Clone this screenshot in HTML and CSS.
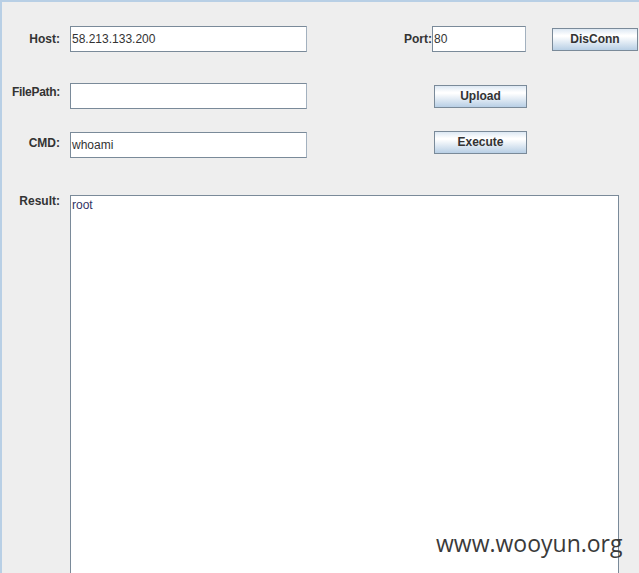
FILE: index.html
```html
<!DOCTYPE html>
<html>
<head>
<meta charset="utf-8">
<link rel="stylesheet" href="styles.css">
</head>
<body>
<div class="frame">
  <div class="row row-host">
    <label class="lbl lbl-host">Host:</label>
    <div class="field field-wide">58.213.133.200</div>
    <label class="lbl lbl-port">Port:</label>
    <div class="field field-port">80</div>
    <button class="btn btn-disconn">DisConn</button>
  </div>
  <div class="row row-path">
    <label class="lbl lbl-path">FilePath:</label>
    <div class="field field-wide"></div>
    <button class="btn btn-action btn-upload">Upload</button>
  </div>
  <div class="row row-cmd">
    <label class="lbl lbl-cmd">CMD:</label>
    <div class="field field-wide">whoami</div>
    <button class="btn btn-action btn-exec">Execute</button>
  </div>
  <div class="row row-result">
    <label class="lbl lbl-result">Result:</label>
    <div class="result">root</div>
  </div>
  <div class="watermark">www.wooyun.org</div>
</div>
</body>
</html>
```

FILE: styles.css
```css
html, body {
  margin: 0;
  padding: 0;
  background: #eeeeee;
}
.frame {
  position: relative;
  width: 639px;
  height: 573px;
  box-sizing: border-box;
  border-top: 2px solid #b8cfe5;
  border-left: 2px solid #b8cfe5;
  background: #eeeeee;
  overflow: hidden;
  font-family: "Liberation Sans", Arial, sans-serif;
  font-size: 12px;
  color: #333333;
}
.row {
  display: flex;
  align-items: flex-start;
}
.row-host { margin-top: 24px; height: 26px; }
.row-path { margin-top: 31px; height: 26px; }
.row-cmd { margin-top: 23px; height: 26px; }
.row-result { margin-top: 37px; }

.lbl {
  width: 58px;
  text-align: right;
  font-weight: bold;
  line-height: 26px;
  height: 26px;
  margin-right: 10px;
  white-space: nowrap;
}
.lbl-path { margin-top: -4px; letter-spacing: -0.3px; }
.lbl-cmd { margin-top: -2px; }
.lbl-result { line-height: 14px; height: 14px; margin-top: -1px; }

.field {
  box-sizing: border-box;
  height: 26px;
  border: 1px solid #7a8a99;
  border-right-color: #a3b1bf;
  border-bottom-color: #7a8a99;
  background: #ffffff;
  padding: 0 1px;
  line-height: 24px;
  font-size: 12px;
  color: #333333;
  white-space: nowrap;
}
.field-wide { width: 237px; }
.lbl-port {
  width: 31px;
  margin-left: 94px;
  margin-right: 0;
}
.field-port { width: 94px; }

.btn {
  box-sizing: border-box;
  height: 23px;
  border: 1px solid #7a8a99;
  background: linear-gradient(to bottom, #dde8f3 0%, #ffffff 30%, #ffffff 35%, #b8cfe5 100%);
  font-family: "Liberation Sans", Arial, sans-serif;
  font-size: 12px;
  font-weight: bold;
  color: #333333;
  padding: 0;
  line-height: 21px;
}
.btn-disconn {
  width: 86px;
  margin-left: 26px;
  margin-top: 2px;
}
.btn-action {
  width: 93px;
  margin-left: 127px;
}
.btn-upload { margin-top: 2px; }
.btn-exec { margin-top: -1px; }

.result {
  box-sizing: border-box;
  width: 549px;
  height: 400px;
  border: 1px solid #7a8a99;
  background: #ffffff;
  padding: 2px 1px;
  line-height: 15px;
  color: #333366;
}

.watermark {
  position: absolute;
  left: 434px;
  top: 525px;
  font-family: "Open Sans", "DejaVu Sans", sans-serif;
  font-size: 23px;
  color: #3a3a3a;
  white-space: nowrap;
}
```
